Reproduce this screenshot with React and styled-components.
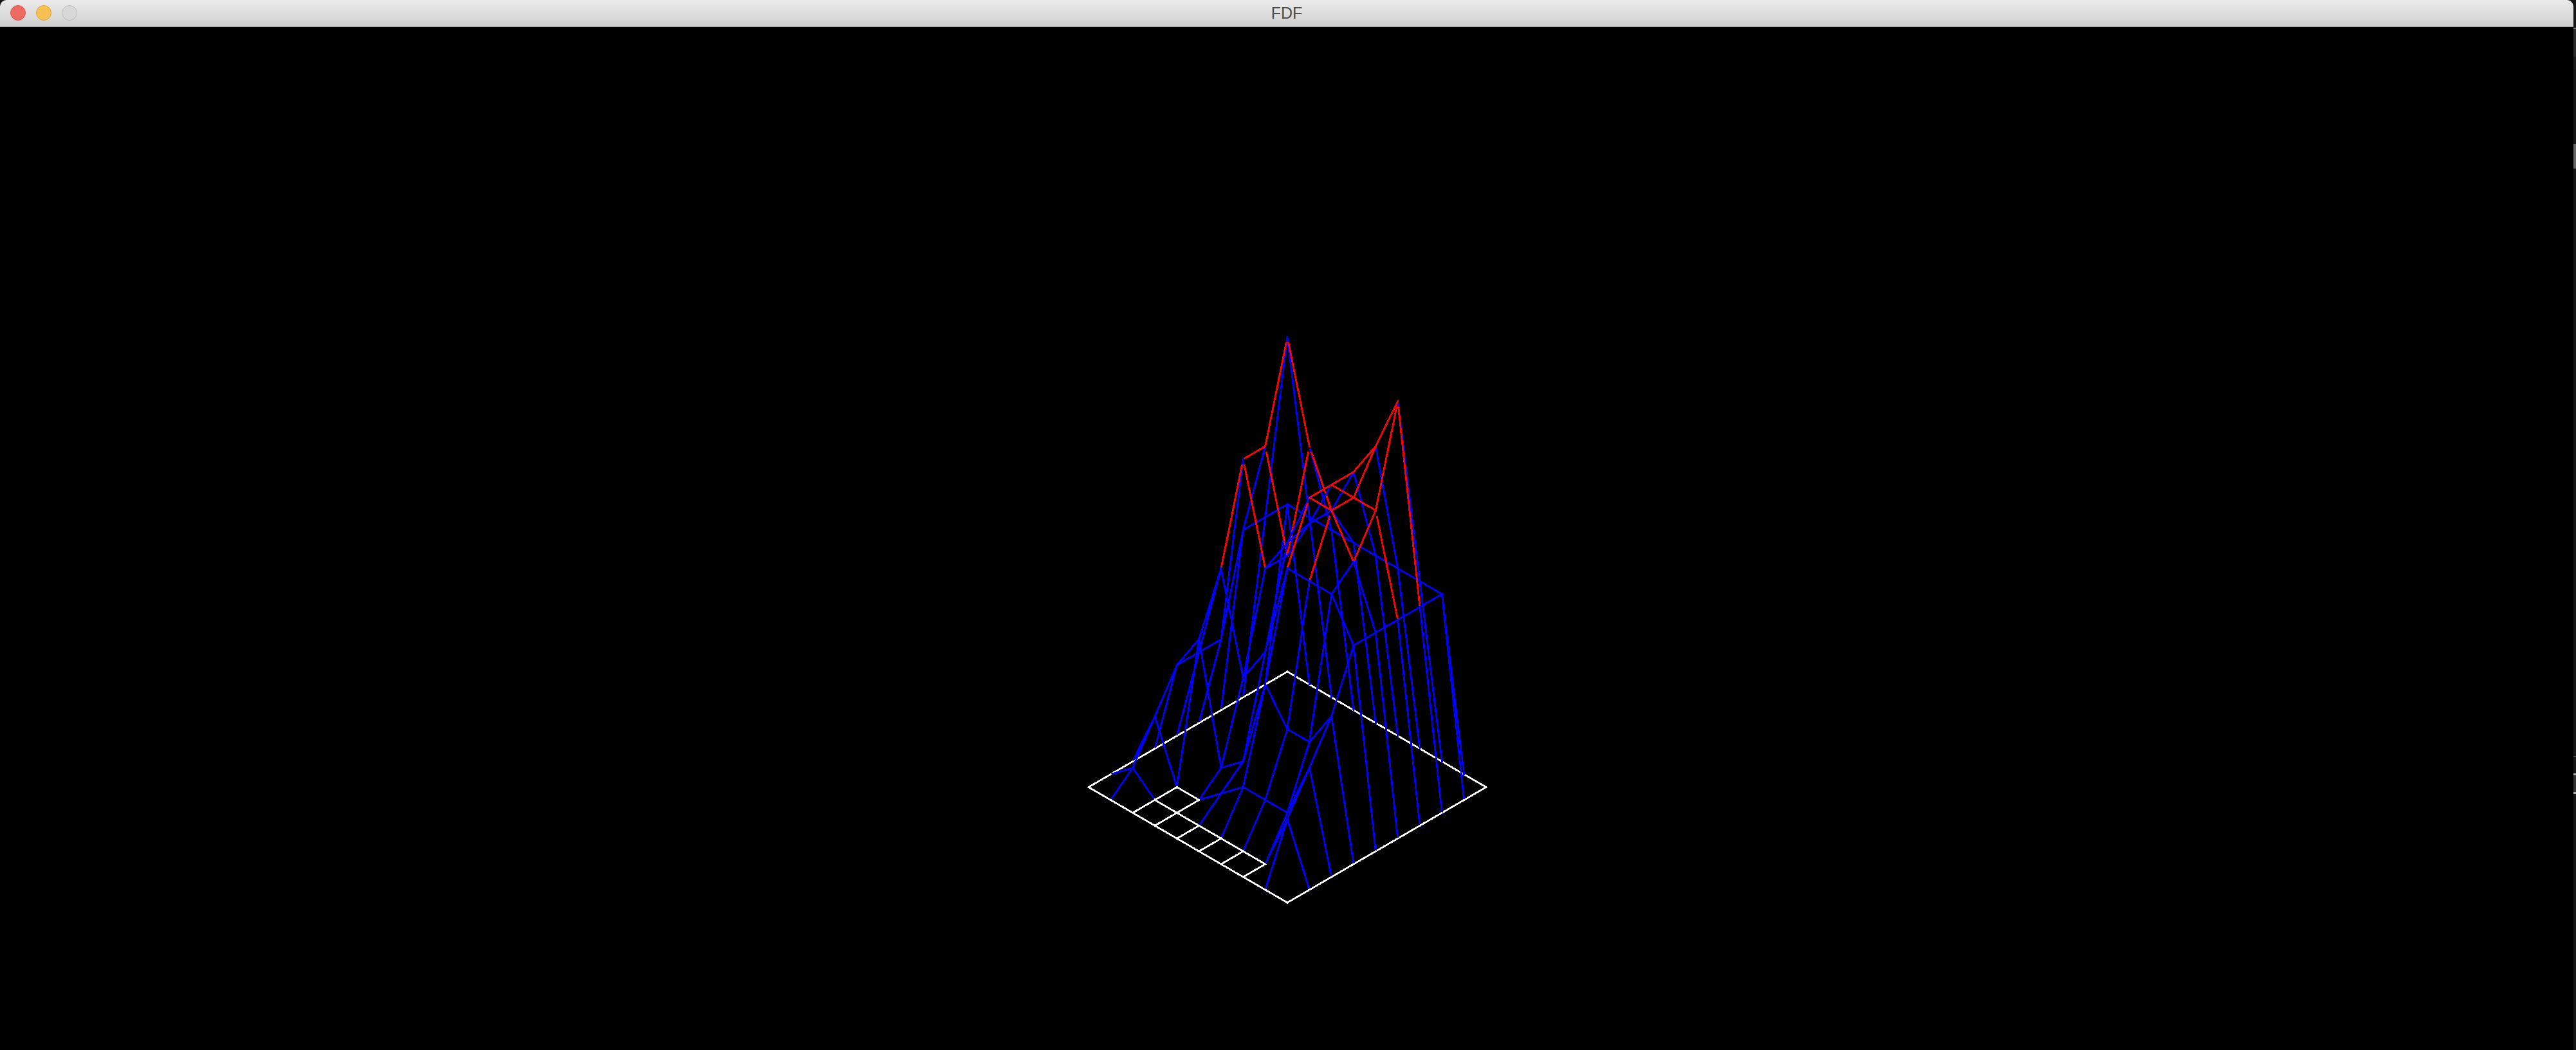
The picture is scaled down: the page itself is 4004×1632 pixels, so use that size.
import React from 'react';
import styled, { createGlobalStyle } from 'styled-components';

const GlobalStyle = createGlobalStyle`
    html, body {
        margin: 0;
        padding: 0;
        background: #161616;
    }
`;

const Page = styled.div`
    width: 4004px;
    height: 1632px;
    display: flex;
    overflow: hidden;
`;

const Window = styled.div`
    width: 4000px;
    display: flex;
    flex-direction: column;
    border-radius: 10px 10px 0 0;
    overflow: hidden;
    background: #000;
`;

const TitleBar = styled.div`
    height: 41px;
    flex-shrink: 0;
    position: relative;
    display: flex;
    align-items: center;
    justify-content: center;
    background: linear-gradient(#ebebeb, #d0d0d0);
    border-bottom: 1px solid #a8a8a8;
`;

const Lights = styled.div`
    position: absolute;
    left: 16px;
    top: 8px;
    display: flex;
    gap: 16px;
`;

const Light = styled.div`
    width: 24px;
    height: 24px;
    box-sizing: border-box;
    border-radius: 50%;
    background: ${(p) => p.$color};
    border: 1px solid ${(p) => p.$edge};
`;

const Title = styled.span`
    font-family: 'Liberation Sans', Arial, sans-serif;
    font-size: 25px;
    color: #4c4c4c;
`;

const Canvas = styled.svg`
    display: block;
    flex: 1;
    width: 4000px;
`;

const Strip = styled.div`
    width: 4px;
    display: flex;
    flex-direction: column;
    padding-top: 43px;
`;

const Tick = styled.div`
    height: ${(p) => p.$h}px;
    margin-top: ${(p) => p.$top || 0}px;
    background: ${(p) => p.$color};
`;

// z values of the map, one line per row, in px above the plane
const MAP = [
    [0, 0, 0, 0, 0, 0, 0, 0, 0, 0],
    [0, 300, 300, 300, 300, 300, 300, 300, 300, 0],
    [0, 300, 600, 450, 370, 450, 510, 600, 300, 0],
    [0, 300, 450, 300, 370, 450, 450, 450, 300, 0],
    [0, 150, 450, 300, 360, 450, 450, 390, 300, 0],
    [0, 150, 300, 150, 210, 360, 360, 360, 300, 0],
    [0, 150, 210, 30, 60, 200, 150, 150, 210, 0],
    [0, 90, 0, 0, 30, 60, 60, 60, 150, 0],
    [0, 30, 0, 0, 0, 0, 0, 0, 90, 0],
    [0, 0, 0, 0, 0, 0, 0, 0, 0, 0],
];

const ORIGIN_X = 2001;
const ORIGIN_Y = 1002;
const STEP_X = 34.33;
const STEP_Y = 19.94;
const RED_FROM = 400;
const RED_TRIM = 10;

const project = (x, y) => [
    ORIGIN_X + (x - y) * STEP_X,
    ORIGIN_Y + (x + y) * STEP_Y - MAP[y][x],
];

const lineColor = (from, to) => {
    if (from === 0 && to === 0) return '#ffffff';
    return from >= RED_FROM ? '#ff0000' : '#0000ff';
};

function buildSegments() {
    const segments = [];
    MAP.forEach((row, y) => {
        row.forEach((z, x) => {
            if (x < 9) segments.push({ a: [x, y], b: [x + 1, y], color: lineColor(z, MAP[y][x + 1]) });
            if (y < 9) segments.push({ a: [x, y], b: [x, y + 1], color: lineColor(z, MAP[y + 1][x]) });
        });
    });
    return segments;
}

// red lines leave a steep node a little below it, the blue tip stays visible
function trimStart([x1, y1], [x2, y2]) {
    const len = Math.hypot(x2 - x1, y2 - y1);
    if (len < 100) return [x1, y1];
    return [x1 + ((x2 - x1) / len) * RED_TRIM, y1 + ((y2 - y1) / len) * RED_TRIM];
}

function Wireframe() {
    return (
        <Canvas viewBox="0 0 4000 1590" strokeWidth="2.8" strokeLinecap="square" shapeRendering="crispEdges">
            {buildSegments().map(({ a, b, color }) => {
                const end = project(b[0], b[1]);
                let start = project(a[0], a[1]);
                if (color === '#ff0000') start = trimStart(start, end);
                return <line key={`${a}-${b}`} x1={start[0]} y1={start[1]} x2={end[0]} y2={end[1]} stroke={color} />;
            })}
        </Canvas>
    );
}

export default function App() {
    return (
        <Page>
            <GlobalStyle />
            <Window>
                <TitleBar>
                    <Lights>
                        <Light $color="#ee6b62" $edge="#d9574e" />
                        <Light $color="#f6c152" $edge="#dfa53d" />
                        <Light $color="#d8d8d8" $edge="#bcbcbc" />
                    </Lights>
                    <Title>FDF</Title>
                </TitleBar>
                <Wireframe />
            </Window>
            <Strip>
                <Tick $h={2} $color="#777" />
                <Tick $h={43} $color="#2b2b2b" />
                <Tick $h={20} $color="#1c1c1c" />
                <Tick $h={38} $top={116} $color="#666" />
                <Tick $h={2} $top={913} $color="#484848" />
                <Tick $h={3} $top={25} $color="#aaa" />
                <Tick $h={26} $color="#333" />
                <Tick $h={3} $color="#aaa" />
            </Strip>
        </Page>
    );
}
